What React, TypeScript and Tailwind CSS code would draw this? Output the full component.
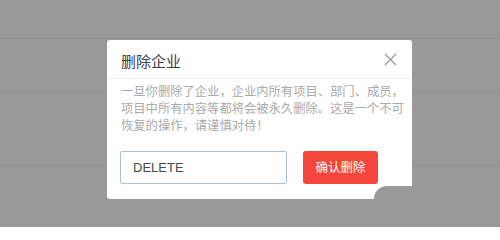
import React from "react";

export default function App() {
  const font = { fontFamily: '"Noto Sans CJK SC", "Noto Sans", sans-serif' };
  return (
    <div
      className="relative w-[500px] h-[227px] overflow-hidden bg-[#999999]"
      style={font}
    >
      {/* background page rows */}
      <div className="flex flex-col">
        <div className="h-[39px] border-b border-[#919191]" />
        <div className="h-[53px] border-b border-[#939393]" />
        <div className="h-[74px] border-b border-[#939393]" />
      </div>

      {/* modal */}
      <div className="absolute left-[107px] top-[40px] w-[305px] h-[159px] bg-white rounded-[3px] flex flex-col">
        <div className="h-[39px] flex items-center justify-between pt-[3px] pl-[14px] pr-[15px] border-b border-[#eeeeee]">
          <span className="text-[15px] text-[#404040] leading-none">删除企业</span>
          <svg width="13" height="13" viewBox="0 0 13 13" className="mt-[-3px]">
            <path d="M1 1 L12 12 M12 1 L1 12" stroke="#9a9a9a" strokeWidth="1.3" fill="none" />
          </svg>
        </div>
        <div className="px-[14px] pt-[4px] text-[12.3px] leading-[17px] text-[#aaaaaa] whitespace-nowrap">
          一旦你删除了企业，企业内所有项目、部门、成员，
          <br />
          项目中所有内容等都将会被永久删除。这是一个不可
          <br />
          恢复的操作，请谨慎对待！
        </div>
        <div className="flex items-center gap-[16px] pl-[13px] mt-[17px]">
          <div className="w-[167px] h-[33px] border border-[#a9bfdf] rounded-[2px] flex items-center pl-[12px] text-[13px] text-[#4a4a4a]" style={{ fontFamily: '"Liberation Sans", Arial, sans-serif' }}>
            DELETE
          </div>
          <button className="w-[75px] h-[33px] bg-[#f5463b] rounded-[3px] text-white text-[12.5px] flex items-center justify-center">
            确认删除
          </button>
        </div>
        <div className="absolute left-[267px] top-[146px] w-[38px] h-[13px] bg-[#999999] rounded-tl-[14px]" />
      </div>
    </div>
  );
}
